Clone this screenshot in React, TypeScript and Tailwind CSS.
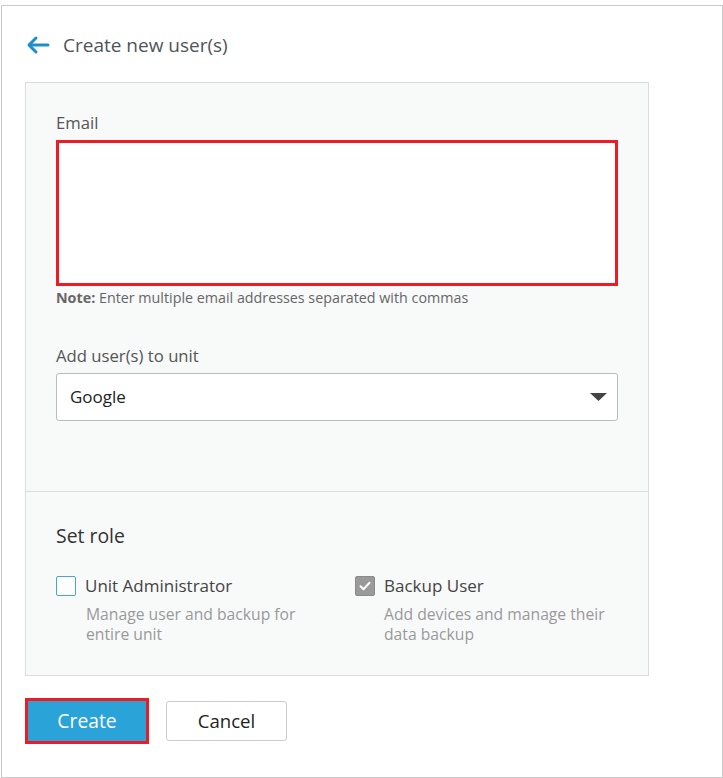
import React from "react";

export default function App() {
  return (
    <div
      className="w-[723px] h-[778px] bg-white pt-[5px] pl-[1px]"
      style={{ fontFamily: '"Segoe UI", "Open Sans", "Noto Sans", sans-serif' }}
    >
      <div className="w-[722px] h-[773px] border border-[#c9c9c9] flex flex-col">
        {/* header */}
        <div className="flex items-center h-[64px] pt-[14px] pl-[24px]">
          <svg width="24" height="20" viewBox="0 0 24 20" className="mr-[13px]">
            <path d="M22 10H4" stroke="#1a8fd0" strokeWidth="3" strokeLinecap="round" fill="none" />
            <path d="M10 3L3 10l7 7" stroke="#1a8fd0" strokeWidth="3" strokeLinecap="round" strokeLinejoin="round" fill="none" />
          </svg>
          <span className="text-[19px] text-[#50555a] leading-[24px]">Create new user(s)</span>
        </div>

        {/* panel */}
        <div className="ml-[23px] mt-[12px] w-[624px] h-[594px] bg-[#f8f9f9] border border-[#dcdcdc] flex flex-col">
          <div className="h-[409px] border-b border-[#dcdcdc] pl-[30px] pt-[30px]">
            <div className="text-[16.7px] leading-[20px] text-[#555]">Email</div>
            <div className="mt-[7px] w-[562px] h-[146px] bg-white border-[3px] border-[#ed1c24]" />
            <div className="mt-[2px] text-[14.3px] leading-[20px] text-[#666] whitespace-nowrap">
              <span className="font-bold">Note:</span> Enter multiple email addresses separated with commas
            </div>
            <div className="mt-[38px] text-[16.7px] leading-[20px] text-[#555]">Add user(s) to unit</div>
            <div className="mt-[7px] w-[562px] h-[48px] bg-white border border-[#bbbbbb] rounded-[3px] flex items-center justify-between pl-[13px] pr-[10px]">
              <span className="text-[17px] text-[#222]">Google</span>
              <svg width="17" height="8" viewBox="0 0 17 8">
                <path d="M0 0h17L8.5 8z" fill="#444" />
              </svg>
            </div>
          </div>
          <div className="pl-[30px] pt-[32px]">
            <div className="text-[19.4px] leading-[24px] text-[#333]">Set role</div>
            <div className="mt-[28px] flex">
              <div className="w-[299px]">
                <div className="flex items-center">
                  <div className="w-[20px] h-[20px] bg-white border border-[#4aa3d8] rounded-[2px]" />
                  <span className="ml-[9px] text-[17px] leading-[20px] text-[#444]">Unit Administrator</span>
                </div>
                <div className="ml-[30px] mt-[8px] text-[15.7px] leading-[20px] text-[#999] w-[240px]">
                  Manage user and backup for entire unit
                </div>
              </div>
              <div>
                <div className="flex items-center">
                  <div className="w-[20px] h-[20px] bg-[#9a9a9a] border border-[#8a8a8a] rounded-[2px] flex items-center justify-center">
                    <svg width="12" height="10" viewBox="0 0 12 10">
                      <path d="M1.5 5.2l3 3L10.5 1.8" stroke="#fff" strokeWidth="2" fill="none" strokeLinecap="round" strokeLinejoin="round" />
                    </svg>
                  </div>
                  <span className="ml-[9px] text-[17px] leading-[20px] text-[#444]">Backup User</span>
                </div>
                <div className="ml-[29px] mt-[8px] text-[15.7px] leading-[20px] text-[#999] w-[240px]">
                  Add devices and manage their data backup
                </div>
              </div>
            </div>
          </div>
        </div>

        {/* buttons */}
        <div className="ml-[23px] mt-[22px] flex items-center">
          <div className="w-[124px] h-[46px] border-[3px] border-[#ed1c24] bg-white flex">
            <button className="w-full h-full bg-[#2aa3d8] text-white text-[19.3px]">Create</button>
          </div>
          <button className="ml-[17px] w-[121px] h-[40px] bg-white border border-[#cccccc] rounded-[3px] text-[18.6px] text-[#222]">
            Cancel
          </button>
        </div>
      </div>
    </div>
  );
}
